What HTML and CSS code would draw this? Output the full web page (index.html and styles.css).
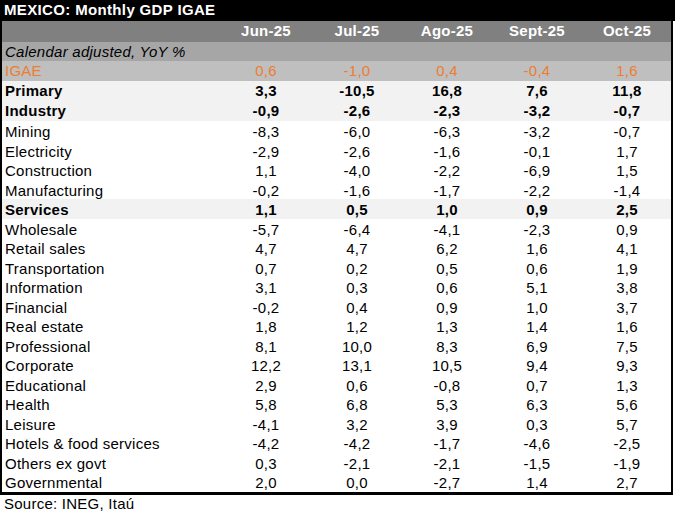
FILE: index.html
```html
<!DOCTYPE html>
<html>
<head>
<meta charset="utf-8">
<link rel="stylesheet" href="styles.css">
</head>
<body>
<div class="sheet">
  <div class="title">MEXICO: Monthly GDP IGAE</div>
  <div class="table">
    <div class="row head"><div class="lbl"></div><div>Jun-25</div><div>Jul-25</div><div>Ago-25</div><div>Sept-25</div><div>Oct-25</div></div>
    <div class="row cal"><div class="lbl">Calendar adjusted, YoY %</div></div>
    <div class="row igae"><div class="lbl">IGAE</div><div>0,6</div><div>-1,0</div><div>0,4</div><div>-0,4</div><div>1,6</div></div>
    <div class="row bold shade tall"><div class="lbl">Primary</div><div>3,3</div><div>-10,5</div><div>16,8</div><div>7,6</div><div>11,8</div></div>
    <div class="row bold shade tall"><div class="lbl">Industry</div><div>-0,9</div><div>-2,6</div><div>-2,3</div><div>-3,2</div><div>-0,7</div></div>
    <div class="row"><div class="lbl">Mining</div><div>-8,3</div><div>-6,0</div><div>-6,3</div><div>-3,2</div><div>-0,7</div></div>
    <div class="row"><div class="lbl">Electricity</div><div>-2,9</div><div>-2,6</div><div>-1,6</div><div>-0,1</div><div>1,7</div></div>
    <div class="row"><div class="lbl">Construction</div><div>1,1</div><div>-4,0</div><div>-2,2</div><div>-6,9</div><div>1,5</div></div>
    <div class="row"><div class="lbl">Manufacturing</div><div>-0,2</div><div>-1,6</div><div>-1,7</div><div>-2,2</div><div>-1,4</div></div>
    <div class="row bold shade"><div class="lbl">Services</div><div>1,1</div><div>0,5</div><div>1,0</div><div>0,9</div><div>2,5</div></div>
    <div class="row"><div class="lbl">Wholesale</div><div>-5,7</div><div>-6,4</div><div>-4,1</div><div>-2,3</div><div>0,9</div></div>
    <div class="row"><div class="lbl">Retail sales</div><div>4,7</div><div>4,7</div><div>6,2</div><div>1,6</div><div>4,1</div></div>
    <div class="row"><div class="lbl">Transportation</div><div>0,7</div><div>0,2</div><div>0,5</div><div>0,6</div><div>1,9</div></div>
    <div class="row"><div class="lbl">Information</div><div>3,1</div><div>0,3</div><div>0,6</div><div>5,1</div><div>3,8</div></div>
    <div class="row"><div class="lbl">Financial</div><div>-0,2</div><div>0,4</div><div>0,9</div><div>1,0</div><div>3,7</div></div>
    <div class="row"><div class="lbl">Real estate</div><div>1,8</div><div>1,2</div><div>1,3</div><div>1,4</div><div>1,6</div></div>
    <div class="row"><div class="lbl">Professional</div><div>8,1</div><div>10,0</div><div>8,3</div><div>6,9</div><div>7,5</div></div>
    <div class="row"><div class="lbl">Corporate</div><div>12,2</div><div>13,1</div><div>10,5</div><div>9,4</div><div>9,3</div></div>
    <div class="row"><div class="lbl">Educational</div><div>2,9</div><div>0,6</div><div>-0,8</div><div>0,7</div><div>1,3</div></div>
    <div class="row"><div class="lbl">Health</div><div>5,8</div><div>6,8</div><div>5,3</div><div>6,3</div><div>5,6</div></div>
    <div class="row"><div class="lbl">Leisure</div><div>-4,1</div><div>3,2</div><div>3,9</div><div>0,3</div><div>5,7</div></div>
    <div class="row"><div class="lbl">Hotels &amp; food services</div><div>-4,2</div><div>-4,2</div><div>-1,7</div><div>-4,6</div><div>-2,5</div></div>
    <div class="row"><div class="lbl">Others ex govt</div><div>0,3</div><div>-2,1</div><div>-2,1</div><div>-1,5</div><div>-1,9</div></div>
    <div class="row"><div class="lbl">Governmental</div><div>2,0</div><div>0,0</div><div>-2,7</div><div>1,4</div><div>2,7</div></div>
  </div>
  <div class="source">Source: INEG, Itaú</div>
</div>
</body>
</html>
```
FILE: styles.css
```css
html, body {
  margin: 0;
  padding: 0;
  background: #ffffff;
}
.sheet {
  width: 675px;
  font-family: "Liberation Sans", Arial, sans-serif;
  font-size: 15px;
  color: #000000;
  letter-spacing: 0.25px;
}
.title {
  background: #000000;
  color: #ffffff;
  font-weight: bold;
  height: 21px;
  line-height: 20px;
  padding-left: 4px;
  letter-spacing: 0.35px;
}
.table {
  width: 669px;
  border-left: 2px solid #000;
  border-right: 2px solid #000;
  border-bottom: 3px solid #000;
}
.row {
  display: grid;
  grid-template-columns: 219px 90px 92px 88px 92px 88px;
  height: 19.5px;
  line-height: 22px;
  white-space: nowrap;
}
.row > div {
  text-align: center;
}
.row > .lbl {
  text-align: left;
  padding-left: 3px;
}
.head {
  background: #808080;
  color: #ffffff;
  font-weight: bold;
  height: 21px;
  line-height: 19px;
}
.cal {
  background: #a6a6a6;
  font-style: italic;
  height: 19px;
  line-height: 20px;
}
.igae {
  background: #bfbfbf;
  color: #ed7d31;
  height: 20px;
  line-height: 20px;
}
.shade {
  background: #f2f2f2;
}
.bold {
  font-weight: bold;
}
.tall {
  height: 20px;
  line-height: 20px;
}
.source {
  padding-left: 4px;
  line-height: 18px;
}
```
